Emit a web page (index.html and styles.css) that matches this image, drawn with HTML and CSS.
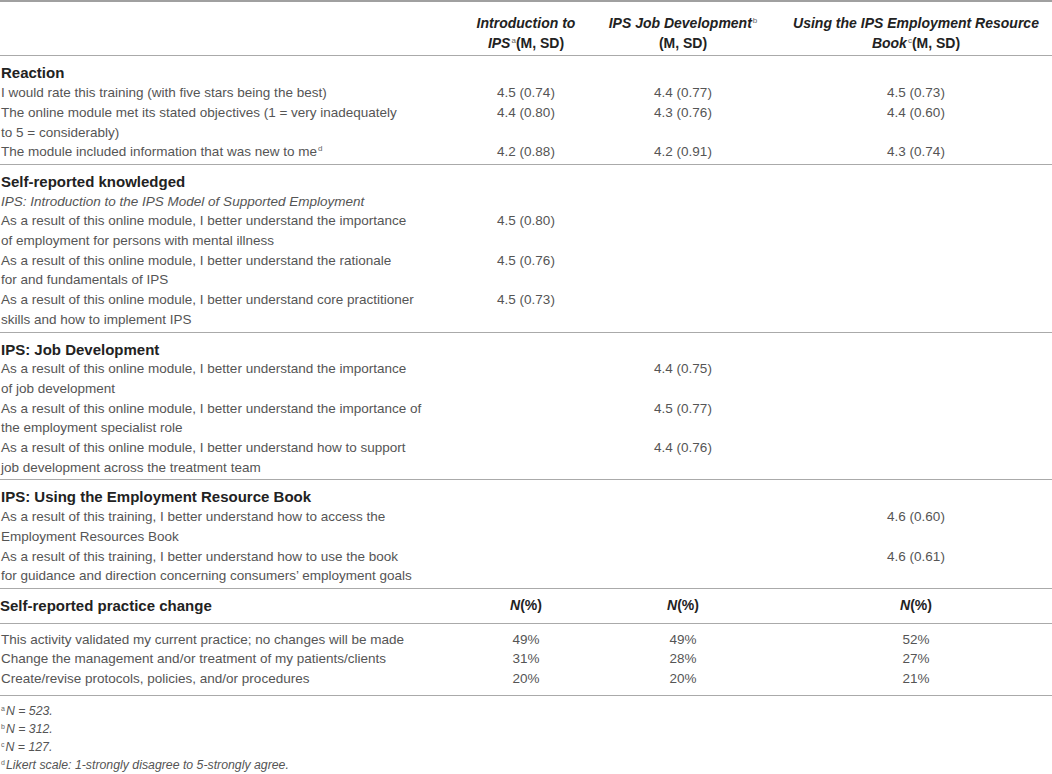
FILE: index.html
```html
<!DOCTYPE html>
<html lang="en">
<head>
    <meta charset="UTF-8">
    <meta name="viewport" content="width=device-width, initial-scale=1.0">
    <title>Training evaluation</title>
    <link rel="stylesheet" href="styles.css">
</head>
<body>
    <table class="results">
        <colgroup>
            <col class="c-label">
            <col class="c-intro">
            <col class="c-job">
            <col class="c-book">
        </colgroup>
        <thead>
            <tr>
                <th></th>
                <th><i>Introduction to</i><br><i>IPS</i><sup>a</sup>(M, SD)</th>
                <th><i>IPS Job Development</i><sup>b</sup><br>(M, SD)</th>
                <th><i>Using the IPS Employment Resource</i><br><i>Book</i><sup>c</sup>(M, SD)</th>
            </tr>
        </thead>
        <tbody>
            <tr class="head"><td class="title">Reaction</td><td></td><td></td><td></td></tr>
            <tr><td>I would rate this training (with five stars being the best)</td><td>4.5 (0.74)</td><td>4.4 (0.77)</td><td>4.5 (0.73)</td></tr>
            <tr><td>The online module met its stated objectives (1 = very inadequately<br>to 5 = considerably)</td><td>4.4 (0.80)</td><td>4.3 (0.76)</td><td>4.4 (0.60)</td></tr>
            <tr class="last"><td>The module included information that was new to me<sup>d</sup></td><td>4.2 (0.88)</td><td>4.2 (0.91)</td><td>4.3 (0.74)</td></tr>

            <tr class="head"><td class="title">Self-reported knowledged</td><td></td><td></td><td></td></tr>
            <tr><td><i>IPS: Introduction to the IPS Model of Supported Employment</i></td><td></td><td></td><td></td></tr>
            <tr><td>As a result of this online module, I better understand the importance<br>of employment for persons with mental illness</td><td>4.5 (0.80)</td><td></td><td></td></tr>
            <tr><td>As a result of this online module, I better understand the rationale<br>for and fundamentals of IPS</td><td>4.5 (0.76)</td><td></td><td></td></tr>
            <tr class="last"><td>As a result of this online module, I better understand core practitioner<br>skills and how to implement IPS</td><td>4.5 (0.73)</td><td></td><td></td></tr>

            <tr class="head"><td class="title">IPS: Job Development</td><td></td><td></td><td></td></tr>
            <tr><td>As a result of this online module, I better understand the importance<br>of job development</td><td></td><td>4.4 (0.75)</td><td></td></tr>
            <tr><td>As a result of this online module, I better understand the importance of<br>the employment specialist role</td><td></td><td>4.5 (0.77)</td><td></td></tr>
            <tr class="last"><td>As a result of this online module, I better understand how to support<br>job development across the treatment team</td><td></td><td>4.4 (0.76)</td><td></td></tr>

            <tr class="head"><td class="title">IPS: Using the Employment Resource Book</td><td></td><td></td><td></td></tr>
            <tr><td>As a result of this training, I better understand how to access the<br>Employment Resources Book</td><td></td><td></td><td>4.6 (0.60)</td></tr>
            <tr class="last"><td>As a result of this training, I better understand how to use the book<br>for guidance and direction concerning consumers’ employment goals</td><td></td><td></td><td>4.6 (0.61)</td></tr>

            <tr class="phead"><td class="title">Self-reported practice change</td><td class="n"><i>N</i>(%)</td><td class="n"><i>N</i>(%)</td><td class="n"><i>N</i>(%)</td></tr>
            <tr class="first"><td>This activity validated my current practice; no changes will be made</td><td>49%</td><td>49%</td><td>52%</td></tr>
            <tr><td>Change the management and/or treatment of my patients/clients</td><td>31%</td><td>28%</td><td>27%</td></tr>
            <tr class="plast"><td>Create/revise protocols, policies, and/or procedures</td><td>20%</td><td>20%</td><td>21%</td></tr>
        </tbody>
    </table>
    <div class="notes">
        <p><sup>a</sup>N = 523.</p>
        <p><sup>b</sup>N = 312.</p>
        <p><sup>c</sup>N = 127.</p>
        <p><sup>d</sup>Likert scale: 1-strongly disagree to 5-strongly agree.</p>
    </div>
</body>
</html>
```

FILE: styles.css
```css
* {
    margin: 0;
    padding: 0;
}
body {
    background: #fff;
    font-family: "Liberation Sans", Arial, sans-serif;
    font-size: 13.5px;
    line-height: 19.7px;
    color: #555;
}
.results {
    width: 1052px;
    table-layout: fixed;
    border-collapse: collapse;
    border-top: 2px solid #a0a0a0;
}
.c-label { width: 466px; }
.c-intro { width: 120px; }
.c-job { width: 194px; }
.c-book { width: 272px; }

th,
td {
    vertical-align: top;
    text-align: center;
    font-weight: normal;
}
td:first-child {
    text-align: left;
    padding-left: 1px;
}
thead th {
    padding: 12px 0 2px;
    font-size: 14px;
    font-weight: bold;
    color: #222;
    border-bottom: 1px solid #aaa;
}
sup {
    font-size: 8px;
    line-height: 0;
    vertical-align: 5px;
    color: #666;
    font-weight: normal;
    font-style: normal;
    margin-left: 1px;
}
.title {
    font-size: 15px;
    font-weight: bold;
    color: #222;
}
.head td {
    padding-top: 7px;
}
.last td {
    padding-bottom: 2px;
    border-bottom: 1px solid #aaa;
}
.phead td {
    padding: 7px 0 7px;
    border-bottom: 1px solid #aaa;
}
.n {
    font-size: 14px;
    font-weight: bold;
    color: #222;
}
.first td {
    padding-top: 6px;
}
.plast td {
    padding-bottom: 6px;
    border-bottom: 1px solid #aaa;
}
.notes {
    padding: 6px 0 0 1px;
    font-size: 12.3px;
    line-height: 18px;
    font-style: italic;
    color: #555;
}
.notes sup {
    font-size: 7px;
    vertical-align: 4px;
    margin: 0 1px 0 0;
}
```
